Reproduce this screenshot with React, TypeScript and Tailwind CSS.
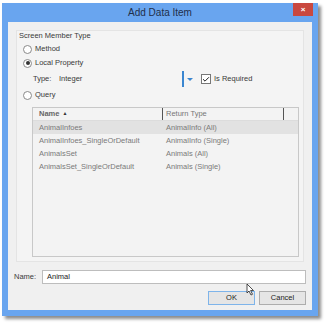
import { Check } from 'lucide-react';

const rows = [
  { name: 'AnimalInfoes', type: 'AnimalInfo (All)', selected: true },
  { name: 'AnimalInfoes_SingleOrDefault', type: 'AnimalInfo (Single)' },
  { name: 'AnimalsSet', type: 'Animals (All)' },
  { name: 'AnimalsSet_SingleOrDefault', type: 'Animals (Single)' },
];

function Radio({ checked, label }: { checked?: boolean; label: string }) {
  return (
    <div className="flex h-[14px] items-center gap-[3px] pl-[6px]">
      <span className="flex h-[9px] w-[9px] items-center justify-center rounded-full border border-[#8a8a8a] bg-white">
        {checked && <span className="h-[4px] w-[4px] rounded-full bg-[#333]" />}
      </span>
      <span className="text-[7.5px] text-[#3a3a3a]">{label}</span>
    </div>
  );
}

export default function App() {
  return (
    <div
      className="relative h-[323px] w-[326px] overflow-hidden bg-white pl-[2px] pt-[3px]"
      style={{ fontFamily: '"Liberation Sans", Arial, sans-serif' }}
    >
      <div className="h-[313px] w-[316px] bg-[#69a5ef] shadow-[3px_3px_3px_rgba(0,0,0,0.45)]">
        {/* title bar */}
        <div className="relative flex h-[19px] items-center justify-center">
          <span className="text-[10px] text-[#1f2f4a]">Add Data Item</span>
          <span className="absolute right-[5px] top-0 flex h-[13px] w-[20px] items-center justify-center bg-[#c9483f] text-[8px] font-bold text-white">
            ×
          </span>
        </div>

        {/* client */}
        <div className="mx-[6px] flex h-[288px] flex-col bg-[#f0f0f0] px-[6px] pt-[8px]">
          <div className="mx-[2px] flex h-[232px] flex-col border border-[#e4e4e4] bg-[#f4f4f4]">
            <div className="flex h-[10px] items-center pl-[2px] text-[7.5px] text-[#3a3a3a]">Screen Member Type</div>
            <div className="mt-[1px]">
              <Radio label="Method" />
              <Radio label="Local Property" checked />
            </div>
            <div className="flex h-[18px] items-center pl-[16px]">
              <span className="w-[26px] text-[7.5px] text-[#3a3a3a]">Type:</span>
              <span className="w-[123px] text-[7.5px] text-[#3a3a3a]">Integer</span>
              <span className="h-[16px] w-[2px] bg-[#3a86d0]" />
              <span className="ml-[3px] h-0 w-0 border-x-[3px] border-t-[3px] border-x-transparent border-t-[#3a86d0]" />
              <span className="ml-[8px] flex h-[10px] w-[10px] items-center justify-center border border-[#777] bg-white">
                <Check className="h-[9px] w-[9px] text-[#222]" strokeWidth={3} />
              </span>
              <span className="ml-[3px] text-[7.5px] text-[#3a3a3a]">Is Required</span>
            </div>
            <Radio label="Query" />

            {/* list */}
            <div className="ml-[15px] mr-[4px] mt-[5px] flex h-[150px] flex-col border border-[#c8c8c8] bg-[#f3f3f3]">
              <div className="flex h-[13px] items-center border-b border-[#dcdcdc] text-[7.5px]">
                <span className="flex w-[129px] items-center gap-[3px] pl-[6px] font-bold text-[#666]">
                  Name <span className="text-[5px] text-[#333]">▲</span>
                </span>
                <span className="h-[12px] w-px bg-[#555]" />
                <span className="w-[120px] pl-[3px] text-[#777]">Return Type</span>
                <span className="h-[12px] w-px bg-[#555]" />
              </div>
              {rows.map((r) => (
                <div
                  key={r.name}
                  className={`flex h-[13px] items-center text-[7.5px] text-[#7a7a7a] ${r.selected ? 'bg-[#e2e2e2]' : ''}`}
                >
                  <span className="w-[130px] pl-[6px]">{r.name}</span>
                  <span className="pl-[3px]">{r.type}</span>
                </div>
              ))}
            </div>
          </div>

          <div className="mt-[8px] flex h-[14px] items-center">
            <span className="w-[28px] text-[7.5px] text-[#3a3a3a]">Name:</span>
            <div className="flex h-[14px] flex-1 items-center border border-[#bdbdbd] bg-white pl-[4px] text-[7.5px] text-[#222]">
              Animal
            </div>
          </div>

          <div className="mt-[7px] flex justify-end gap-[4px]">
            <div className="flex h-[14px] w-[47px] items-center justify-center border border-[#7eb4ea] bg-[#e5e5e5] text-[7.5px] text-[#222]">
              OK
            </div>
            <div className="flex h-[14px] w-[47px] items-center justify-center border border-[#adadad] bg-[#e5e5e5] text-[7.5px] text-[#222]">
              Cancel
            </div>
          </div>
        </div>
      </div>

      {/* mouse cursor */}
      <svg className="absolute left-[246px] top-[283px]" width="9" height="13" viewBox="0 0 9 13">
        <path d="M1 1 L1 10 L3 8 L5 12 L6.5 11.3 L4.6 7.5 L7.5 7.5 Z" fill="white" stroke="#222" strokeWidth="0.8" />
      </svg>
    </div>
  );
}
